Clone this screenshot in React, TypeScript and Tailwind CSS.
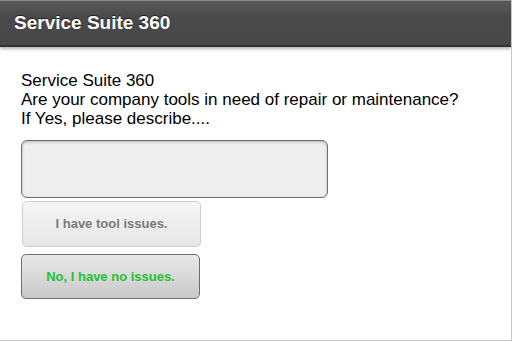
export default function App() {
  return (
    <div className="w-[512px] h-[341px] bg-white overflow-hidden flex flex-col border-r border-b border-[#c8c8c8] font-['Liberation_Sans',Arial,sans-serif]">
      {/* header bar */}
      <div className="h-[47px] shrink-0 bg-[linear-gradient(#5a5a5a,#4a4a4a_35%,#474747)] border-t border-[#8a8a8a] border-b-2 border-b-[#333] shadow-[0_2px_3px_rgba(0,0,0,0.3)] flex items-center px-[14px]">
        <h1 className="text-white text-[19px] font-bold [text-shadow:0_-1px_1px_rgba(0,0,0,0.6)]">Service Suite 360</h1>
      </div>

      <div className="flex flex-col pl-[21px] pt-[24px]">
        <p className="text-[17px] leading-[19px] text-black">
          Service Suite 360
          <br />
          Are your company tools in need of repair or maintenance?
          <br />
          If Yes, please describe....
        </p>

        <textarea className="mt-[12px] w-[307px] h-[58px] rounded-[6px] border border-[#6f6f6f] bg-[#efefef] shadow-[inset_0_1px_3px_rgba(0,0,0,0.25)] resize-none outline-none" />

        <button className="mt-[3px] ml-px w-[179px] h-[46px] rounded-[5px] border border-[#cfcfcf] bg-[linear-gradient(#f6f6f6,#e6e6e6)] text-[#7a7a7a] text-[13px] font-bold">
          I have tool issues.
        </button>

        <button className="mt-[7px] w-[179px] h-[45px] rounded-[5px] border border-[#6e6e6e] bg-[linear-gradient(#e8e8e8,#c9c9c9)] text-[#1fc22f] text-[13px] font-bold">
          No, I have no issues.
        </button>
      </div>
    </div>
  );
}
